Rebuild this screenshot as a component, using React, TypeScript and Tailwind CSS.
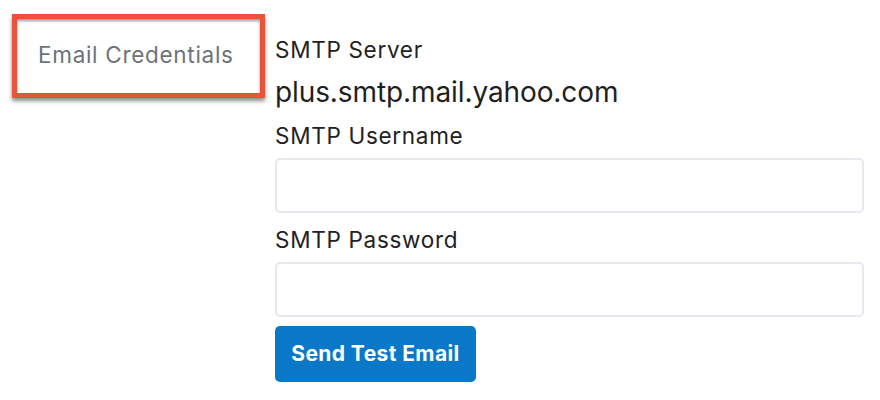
import React from "react";

export default function App() {
  return (
    <div
      className="w-[880px] h-[400px] bg-white flex items-start"
      style={{ fontFamily: "Inter, 'Noto Sans', sans-serif" }}
    >
      <div className="ml-[12px] mt-[14px] w-[253px] h-[84px] border-[5px] border-[#e8533a] shadow-[0_3px_4px_rgba(0,0,0,0.45),inset_0_2px_3px_rgba(0,0,0,0.4)] flex items-center pl-[21px] pb-[2px] shrink-0">
        <span className="text-[22.5px] leading-[28px] tracking-[0.7px] text-[#6c7479]">Email Credentials</span>
      </div>
      <div className="ml-[10px] pt-[36px] w-[589px] flex flex-col text-[#222]">
        <div className="text-[22.5px] leading-[28px] tracking-[0.7px]">SMTP Server</div>
        <div className="mt-[12px] text-[28px] leading-[32px] tracking-[-0.1px] text-[#1f1f1f]">plus.smtp.mail.yahoo.com</div>
        <div className="mt-[14px] text-[22.5px] leading-[28px] tracking-[0.7px]">SMTP Username</div>
        <input
          type="text"
          className="mt-[8px] h-[55px] w-full border-2 border-[#e6e9ed] rounded-[5px] outline-none"
        />
        <div className="mt-[13px] text-[22.5px] leading-[28px] tracking-[0.7px]">SMTP Password</div>
        <input
          type="password"
          className="mt-[8px] h-[55px] w-full border-2 border-[#e6e9ed] rounded-[5px] outline-none"
        />
        <button className="mt-[9px] w-[201px] h-[56px] rounded-[5px] bg-[#0a78c8] text-white font-bold text-[21px] leading-[28px] tracking-[0.4px]">
          Send Test Email
        </button>
      </div>
    </div>
  );
}
